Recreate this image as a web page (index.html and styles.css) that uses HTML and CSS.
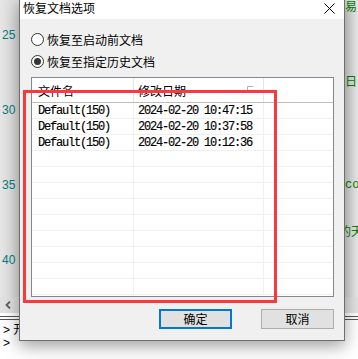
FILE: index.html
```html
<!DOCTYPE html>
<html lang="zh-CN">
<head>
<meta charset="utf-8">
<title>恢复文档选项</title>
<link rel="stylesheet" href="styles.css">
</head>
<body>
<div class="editor">
  <div class="code">
    <div class="gutter">
      <div class="lines">
        <div class="ln"></div><div class="ln"></div><div class="ln">25</div><div class="ln"></div><div class="ln"></div>
        <div class="ln"></div><div class="ln"></div><div class="ln">30</div><div class="ln"></div><div class="ln"></div>
        <div class="ln"></div><div class="ln"></div><div class="ln">35</div><div class="ln"></div><div class="ln"></div>
        <div class="ln"></div><div class="ln"></div><div class="ln">40</div><div class="ln"></div><div class="ln"></div>
      </div>
    </div>
    <div class="text"></div>
    <div class="edge">
      <div class="lines">
        <div class="ln">易：</div><div class="ln"></div><div class="ln"></div><div class="ln"></div><div class="ln"></div>
        <div class="ln">日：</div><div class="ln"></div><div class="ln"></div><div class="ln"></div><div class="ln"></div>
        <div class="ln"></div><div class="ln"></div><div class="ln code-mono">co</div><div class="ln"></div><div class="ln"></div>
        <div class="ln"><span class="cut">的天</span></div><div class="ln"></div><div class="ln"></div><div class="ln"></div><div class="ln"></div>
      </div>
    </div>
  </div>
  <div class="hscroll">
    <svg class="arrow" width="6" height="8" viewBox="0 0 6 8"><path d="M5 0.5 L1.5 4 L5 7.5" fill="none" stroke="#606060" stroke-width="1.8"/></svg>
  </div>
  <div class="split"></div>
  <div class="output">
    <div class="out-line">&gt; 开始</div>
    <div class="out-line">&gt;</div>
  </div>
</div>

<div class="dialog">
  <div class="titlebar">
    <span class="title">恢复文档选项</span>
    <svg class="close" width="11" height="11" viewBox="0 0 11 11"><path d="M0.5 0.5 L10.5 10.5 M10.5 0.5 L0.5 10.5" stroke="#000" stroke-width="1"/></svg>
  </div>
  <div class="content">
    <label class="radio">
      <svg width="13" height="13" viewBox="0 0 13 13"><circle cx="6.5" cy="6.5" r="6" fill="#fff" stroke="#333"/></svg>
      <span>恢复至启动前文档</span>
    </label>
    <label class="radio">
      <svg width="13" height="13" viewBox="0 0 13 13"><circle cx="6.5" cy="6.5" r="6" fill="#fff" stroke="#333"/><circle cx="6.5" cy="6.5" r="3.5" fill="#333"/></svg>
      <span>恢复至指定历史文档</span>
    </label>
    <div class="listbox">
      <div class="row head">
        <div class="cell c1">文件名</div>
        <div class="cell c2">修改日期<svg class="sort" width="7" height="6" viewBox="0 0 7 6"><path d="M0.5 0.5 H6.5 M0.5 0.5 V5.5" stroke="#b4b4b4" stroke-width="1"/></svg></div>
        <div class="cell c3"></div>
      </div>
      <div class="row"><div class="cell c1 mono">Default(150)</div><div class="cell c2 mono">2024-02-20 10:47:15</div><div class="cell c3"></div></div>
      <div class="row"><div class="cell c1 mono">Default(150)</div><div class="cell c2 mono">2024-02-20 10:37:58</div><div class="cell c3"></div></div>
      <div class="row"><div class="cell c1 mono">Default(150)</div><div class="cell c2 mono">2024-02-20 10:12:36</div><div class="cell c3"></div></div>
      <div class="row"><div class="cell c1"></div><div class="cell c2"></div><div class="cell c3"></div></div>
      <div class="row"><div class="cell c1"></div><div class="cell c2"></div><div class="cell c3"></div></div>
      <div class="row"><div class="cell c1"></div><div class="cell c2"></div><div class="cell c3"></div></div>
      <div class="row"><div class="cell c1"></div><div class="cell c2"></div><div class="cell c3"></div></div>
      <div class="row"><div class="cell c1"></div><div class="cell c2"></div><div class="cell c3"></div></div>
      <div class="row"><div class="cell c1"></div><div class="cell c2"></div><div class="cell c3"></div></div>
      <div class="row"><div class="cell c1"></div><div class="cell c2"></div><div class="cell c3"></div></div>
      <div class="row"><div class="cell c1"></div><div class="cell c2"></div><div class="cell c3"></div></div>
      <div class="row"><div class="cell c1"></div><div class="cell c2"></div><div class="cell c3"></div></div>
    </div>
    <div class="buttons">
      <button class="btn primary">确定</button>
      <button class="btn">取消</button>
    </div>
  </div>
</div>

<div class="mark"></div>
</body>
</html>
```

FILE: styles.css
```css
* { box-sizing: border-box; }

body {
  margin: 0;
  width: 358px;
  height: 359px;
  overflow: hidden;
  position: relative;
  background: #fff;
  font-family: "Noto Sans CJK SC", "Liberation Sans", sans-serif;
  font-size: 12px;
  color: #000;
}

/* background editor */
.editor { display: flex; flex-direction: column; }

.code { display: flex; height: 297px; overflow: hidden; }

.lines { margin-top: -2px; }
.ln { height: 15px; line-height: 15px; white-space: nowrap; }

.gutter {
  width: 19px;
  background: linear-gradient(to right, #e6e6e6, #dcdcdc);
  color: #008080;
  font-family: "Liberation Sans", sans-serif;
  font-size: 12px;
  padding-left: 2px;
}

.text { flex: 1; background: #fff; }

.edge {
  width: 13px;
  background: linear-gradient(to right, #d6d6d6, #e8e8e8);
  color: #008000;
  overflow: hidden;
  font-size: 12px;
}
.code-mono { font-family: "Liberation Mono", monospace; }
.cut { display: inline-block; margin-left: -6px; }

.hscroll {
  height: 16px;
  background: #e2e2e2;
  display: flex;
  align-items: center;
  padding-left: 5px;
}

.split {
  margin-top: 3px;
  height: 4px;
  border-top: 1px solid #555;
  border-bottom: 1px solid #555;
}

.output {
  padding-top: 4px;
  padding-left: 3px;
  font-family: "Liberation Sans", "Noto Sans CJK SC", sans-serif;
  font-size: 12px;
  line-height: 13px;
}
.out-line { height: 13px; line-height: 13px; white-space: nowrap; overflow: hidden; }

/* dialog */
.dialog {
  position: absolute;
  left: 19px;
  top: -1px;
  width: 326px;
  height: 342px;
  border: 1px solid #6e6e6e;
  background: #f0f0f0;
  box-shadow: 0 5px 16px rgba(0, 0, 0, 0.38);
  display: flex;
  flex-direction: column;
}

.titlebar {
  height: 19px;
  background: #fff;
  display: flex;
  justify-content: space-between;
  padding-left: 3px;
  padding-right: 9px;
}
.title { line-height: 16px; font-size: 12px; }
.close { margin-top: 3px; }

.content {
  flex: 1;
  padding: 9px 10px 0 11px;
  display: flex;
  flex-direction: column;
}

.radio {
  height: 22px;
  display: flex;
  align-items: center;
  gap: 3px;
  font-size: 12px;
}
.radio svg { flex: none; }

.listbox {
  margin-top: 5px;
  height: 220px;
  border: 1px solid #828790;
  background: #fff;
  overflow: hidden;
}

.row {
  display: grid;
  grid-template-columns: 102px 130px 1fr;
  height: 16px;
  border-bottom: 1px solid #f0f0f0;
}
.row.head {
  height: 25px;
  border-bottom: 1px solid #bdbdbd;
}

.cell {
  border-right: 1px solid #f0f0f0;
  display: flex;
  align-items: center;
  white-space: nowrap;
  overflow: hidden;
}
.head .cell { border-right-color: #e5e5e5; }
.cell.c3 { border-right: none; }
.c1 { padding-left: 6px; }
.c2 { padding-left: 4px; }
.head .c2 { padding-right: 9px; }
.sort { margin-left: auto; margin-top: -2px; }

.mono {
  font-family: "Liberation Mono", monospace;
  font-size: 12px;
  letter-spacing: -1.2px;
  -webkit-text-stroke: 0.15px #000;
}

.buttons {
  margin-top: 12px;
  display: flex;
  justify-content: flex-end;
  gap: 29px;
}

.btn {
  width: 73px;
  height: 20px;
  padding: 0;
  margin: 0;
  background: #e1e1e1;
  border: 1px solid #adadad;
  font-family: "Noto Sans CJK SC", sans-serif;
  font-size: 12px;
  color: #000;
  line-height: 16px;
}
.btn.primary { border: 2px solid #0078d7; }

/* red annotation */
.mark {
  position: absolute;
  left: 23px;
  top: 90px;
  width: 254px;
  height: 213px;
  border: 3px solid #fa3a3a;
}
```
